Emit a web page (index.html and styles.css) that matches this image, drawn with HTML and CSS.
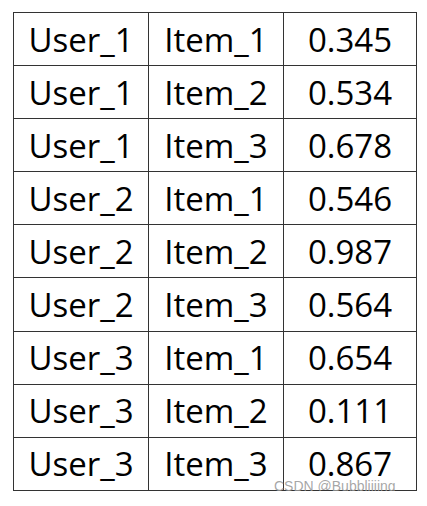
FILE: index.html
```html
<!DOCTYPE html>
<html>
<head>
<meta charset="utf-8">
<link rel="stylesheet" href="styles.css">
</head>
<body>
<div class="wrap">
<table class="grid">
<tr><td>User_1</td><td>Item_1</td><td>0.345</td></tr>
<tr><td>User_1</td><td>Item_2</td><td>0.534</td></tr>
<tr><td>User_1</td><td>Item_3</td><td>0.678</td></tr>
<tr><td>User_2</td><td>Item_1</td><td>0.546</td></tr>
<tr><td>User_2</td><td>Item_2</td><td>0.987</td></tr>
<tr><td>User_2</td><td>Item_3</td><td>0.564</td></tr>
<tr><td>User_3</td><td>Item_1</td><td>0.654</td></tr>
<tr><td>User_3</td><td>Item_2</td><td>0.111</td></tr>
<tr><td>User_3</td><td>Item_3</td><td>0.867</td></tr>
</table>
<div class="mark">CSDN @Bubbliiiing</div>
</div>
</body>
</html>
```
FILE: styles.css
```css
html, body { margin: 0; padding: 0; background: #fff; }
.wrap { position: relative; padding: 12px 0 0 13px; }
.grid {
  border-collapse: collapse;
  font-family: "Open Sans", sans-serif;
  font-size: 33px;
  color: #000;
}
.grid td {
  border: 1px solid #333;
  height: 52.1px;
  padding: 0;
  text-align: center;
  vertical-align: middle;
  line-height: 1;
}
.grid td:nth-child(1) { width: 134px; }
.grid td:nth-child(2) { width: 134px; }
.grid td:nth-child(3) { width: 132px; }
.mark {
  position: absolute;
  left: 274px;
  top: 478px;
  font-family: "Liberation Sans", sans-serif;
  font-size: 14px;
  color: rgba(150,150,150,0.85);
}
```
